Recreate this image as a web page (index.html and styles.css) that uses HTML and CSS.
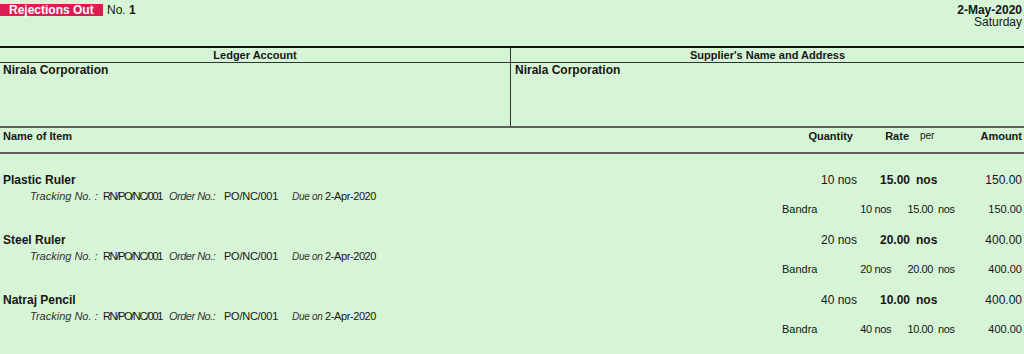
FILE: index.html
```html
<!DOCTYPE html>
<html lang="en">
  <head>
    <meta charset="UTF-8" />
    <meta name="viewport" content="width=device-width, initial-scale=1.0" />
    <title>Rejections Out</title>
    <link rel="stylesheet" href="styles.css">
  </head>
  <body>
    <div class="voucher">
      <header class="top">
        <div class="title">
          <span class="badge">Rejections Out</span>
          <span class="vno">No. <b>1</b></span>
        </div>
        <div class="date">
          <b>2-May-2020</b>
          <span>Saturday</span>
        </div>
      </header>

      <section class="party">
        <div class="party-col left">
          <div class="col-head">Ledger Account</div>
          <div class="col-body"><b>Nirala Corporation</b></div>
        </div>
        <div class="party-col right">
          <div class="col-head">Supplier's Name and Address</div>
          <div class="col-body"><b>Nirala Corporation</b></div>
        </div>
      </section>

      <div class="item-head">
        <span class="c-name">Name of Item</span>
        <span class="c-qty">Quantity</span>
        <span class="c-rate">Rate</span>
        <span class="c-per">per</span>
        <span class="c-amt">Amount</span>
      </div>

      <div class="items">
        <div class="item">
          <div class="main">
            <span class="c-name">Plastic Ruler</span>
            <span class="c-qty">10 nos</span>
            <span class="c-rate">15.00</span>
            <span class="c-per">nos</span>
            <span class="c-amt">150.00</span>
          </div>
          <div class="track">
            <i class="t-lbl">Tracking No. :</i><span class="t-no">RN/PO/NC/001</span>
            <i class="o-lbl">Order No.:</i><span class="o-no">PO/NC/001</span>
            <i class="d-lbl">Due on</i><span class="d-val">2-Apr-2020</span>
          </div>
          <div class="sub">
            <span class="s-loc">Bandra</span>
            <span class="s-qty">10 nos</span>
            <span class="s-rate">15.00</span>
            <span class="s-per">nos</span>
            <span class="s-amt">150.00</span>
          </div>
        </div>

        <div class="item">
          <div class="main">
            <span class="c-name">Steel Ruler</span>
            <span class="c-qty">20 nos</span>
            <span class="c-rate">20.00</span>
            <span class="c-per">nos</span>
            <span class="c-amt">400.00</span>
          </div>
          <div class="track">
            <i class="t-lbl">Tracking No. :</i><span class="t-no">RN/PO/NC/001</span>
            <i class="o-lbl">Order No.:</i><span class="o-no">PO/NC/001</span>
            <i class="d-lbl">Due on</i><span class="d-val">2-Apr-2020</span>
          </div>
          <div class="sub">
            <span class="s-loc">Bandra</span>
            <span class="s-qty">20 nos</span>
            <span class="s-rate">20.00</span>
            <span class="s-per">nos</span>
            <span class="s-amt">400.00</span>
          </div>
        </div>

        <div class="item">
          <div class="main">
            <span class="c-name">Natraj Pencil</span>
            <span class="c-qty">40 nos</span>
            <span class="c-rate">10.00</span>
            <span class="c-per">nos</span>
            <span class="c-amt">400.00</span>
          </div>
          <div class="track">
            <i class="t-lbl">Tracking No. :</i><span class="t-no">RN/PO/NC/001</span>
            <i class="o-lbl">Order No.:</i><span class="o-no">PO/NC/001</span>
            <i class="d-lbl">Due on</i><span class="d-val">2-Apr-2020</span>
          </div>
          <div class="sub">
            <span class="s-loc">Bandra</span>
            <span class="s-qty">40 nos</span>
            <span class="s-rate">10.00</span>
            <span class="s-per">nos</span>
            <span class="s-amt">400.00</span>
          </div>
        </div>
      </div>
    </div>
  </body>
</html>
```

FILE: styles.css
```css
body {
  margin: 0;
  background-color: #d6f5d6;
  color: #151515;
  font-family: "Liberation Sans", Arial, sans-serif;
  font-size: 12px;
}
.voucher {
  height: 354px;
  overflow: hidden;
}

/* top bar */
.top {
  height: 46px;
  display: flex;
  justify-content: space-between;
  align-items: flex-start;
}
.title {
  display: flex;
  align-items: center;
  padding-top: 4px;
}
.badge {
  width: 103px;
  height: 12px;
  line-height: 13px;
  padding-left: 9px;
  box-sizing: border-box;
  background-color: #dc1d52;
  color: #fff;
  font-weight: bold;
}
.vno {
  margin-left: 4px;
  line-height: 12px;
}
.date {
  display: flex;
  flex-direction: column;
  align-items: flex-end;
  padding: 4px 2px 0 0;
  line-height: 12px;
}

/* party section */
.party {
  display: grid;
  grid-template-columns: 511px 1fr;
  border-top: 2px solid #111;
  border-bottom: 2px solid #5e5e5e;
}
.party-col.left {
  border-right: 1px solid #333;
}
.col-head {
  height: 13px;
  line-height: 13px;
  padding-top: 1px;
  border-bottom: 1px solid #333;
  text-align: center;
  font-size: 11px;
  font-weight: bold;
}
.col-body {
  height: 63px;
  line-height: 14px;
  padding-left: 3px;
}
.party-col.right .col-body {
  padding-left: 4px;
}

/* item table */
.item-head,
.main,
.sub {
  display: flex;
  padding: 0 2px 0 3px;
}
.item-head {
  height: 26px;
  line-height: 14px;
  padding-top: 1px;
  box-sizing: border-box;
  border-bottom: 2px solid #5e5e5e;
  font-size: 11px;
  font-weight: bold;
}
.c-name {
  flex: 1;
}
.c-qty {
  width: 80px;
  text-align: right;
}
.c-rate {
  width: 53px;
  text-align: right;
}
.c-per {
  width: 50px;
  padding-left: 6px;
  box-sizing: border-box;
}
.c-amt {
  width: 62px;
  text-align: right;
}
.item-head .c-qty {
  padding-right: 4px;
  box-sizing: border-box;
}
.item-head .c-rate {
  padding-right: 1px;
  box-sizing: border-box;
}
.item-head .c-per {
  padding-left: 10px;
  font-size: 10px;
  font-weight: normal;
}

.items {
  padding-top: 17px;
}
.item {
  margin-bottom: 17px;
}
.main {
  line-height: 18px;
}
.main .c-name,
.main .c-rate,
.main .c-per {
  font-weight: bold;
}

/* tracking details line */
.track {
  display: flex;
  padding-left: 30px;
  height: 15px;
  line-height: 15px;
  font-size: 11px;
  white-space: nowrap;
}
.track i,
.track span {
  flex: none;
}
.track i {
  color: #333;
  font-size: 11px;
}
.t-lbl {
  width: 73px;
}
.t-no {
  width: 66px;
  letter-spacing: -1.35px;
}
.o-lbl {
  width: 55px;
  letter-spacing: -0.5px;
}
.o-no {
  width: 68px;
  letter-spacing: -0.25px;
}
.track .d-lbl {
  width: 33px;
  font-size: 10px;
  letter-spacing: -0.3px;
}
.d-val {
  letter-spacing: -0.4px;
}

.sub {
  justify-content: flex-end;
  height: 10px;
  line-height: 10px;
  font-size: 11px;
}
.s-loc {
  width: 60px;
}
.s-qty {
  width: 49px;
  text-align: right;
  letter-spacing: -0.4px;
}
.s-rate {
  width: 42px;
  text-align: right;
  letter-spacing: -0.4px;
}
.s-per {
  width: 27px;
  padding-left: 5px;
  box-sizing: border-box;
  letter-spacing: -0.4px;
}
.s-amt {
  width: 62px;
  text-align: right;
}
```
